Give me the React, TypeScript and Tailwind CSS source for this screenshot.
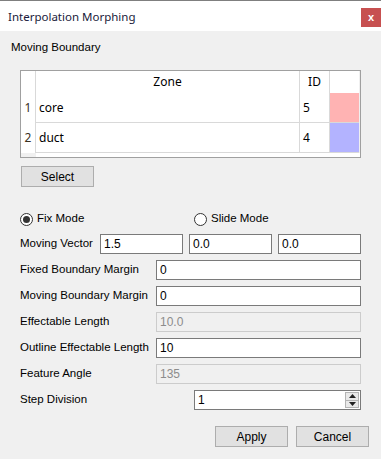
import React from 'react';

const ui = { fontFamily: '"Liberation Sans", Arial, sans-serif' };
const seg = { fontFamily: '"Noto Sans", "Open Sans", sans-serif' };

const TextBox: React.FC<{ value: string; disabled?: boolean; className?: string }> = ({ value, disabled, className }) => (
  <div
    className={`h-[20px] flex items-center pl-[3px] text-[12px] border ${
      disabled ? 'bg-[#f0f0f0] border-[#cccccc] text-[#8c8c8c]' : 'bg-white border-[#7a7a7a] text-black'
    } ${className ?? ''}`}
  >
    {value}
  </div>
);

const FieldRow: React.FC<{ label: string; value: string; disabled?: boolean }> = ({ label, value, disabled }) => (
  <div className="flex items-center mt-[6px] pl-[20px] pr-[20px]">
    <span className="w-[136px] shrink-0 whitespace-nowrap text-[11.5px] text-black">{label}</span>
    <TextBox value={value} disabled={disabled} className="flex-1" />
  </div>
);

const Radio: React.FC<{ checked?: boolean; label: string }> = ({ checked, label }) => (
  <div className="flex items-center gap-[4px]">
    <span className="w-[13px] h-[13px] rounded-full border border-[#333333] bg-white flex items-center justify-center">
      {checked && <span className="w-[7px] h-[7px] rounded-full bg-[#333333]" />}
    </span>
    <span className="text-[11.5px] text-black">{label}</span>
  </div>
);

const WinButton: React.FC<{ label: string; className?: string }> = ({ label, className }) => (
  <div
    className={`w-[73px] h-[21px] flex items-center justify-center bg-[#e1e1e1] border border-[#adadad] text-[12px] text-black ${className ?? ''}`}
  >
    {label}
  </div>
);

const rows = [
  { n: '1', zone: 'core', id: '5', color: 'bg-[#ffb3b3]' },
  { n: '2', zone: 'duct', id: '4', color: 'bg-[#b3b3ff]' },
];

export default function App() {
  return (
    <div className="w-[381px] h-[459px] bg-[#f0f0f0] border-t border-[#7f7f7f] flex flex-col" style={ui}>
      {/* title bar */}
      <div className="h-[30px] bg-white flex justify-between">
        <span className="pl-[8px] pt-[7px] text-[11.5px] text-[#1a1a3a]" style={seg}>
          Interpolation Morphing
        </span>
        <div className="mt-[7px] w-[20px] h-[19px] bg-[#c75050] flex items-center justify-center text-white text-[11px] font-bold">
          x
        </div>
      </div>

      <div className="mt-[8px] pl-[11px] h-[16px] leading-[16px] text-[11.5px] text-black">Moving Boundary</div>

      {/* zone table */}
      <div className="mt-[15px] ml-[20px] w-[341px] h-[88px] border border-[#a0a0a0] bg-white flex flex-col text-[12px] text-black" style={seg}>
        <div className="flex h-[22px]">
          <div className="w-[15px] border-r border-[#d9d9d9]" />
          <div className="w-[264px] border-r border-[#d9d9d9] flex items-center justify-center">Zone</div>
          <div className="w-[30px] border-r border-[#d9d9d9] flex items-center justify-center">ID</div>
          <div className="w-[29px]" />
          <div className="flex-1 bg-[#f0f0f0]" />
        </div>
        {rows.map((r) => (
          <div key={r.n} className="flex h-[30px]">
            <div className="w-[15px] border-r border-[#d9d9d9] flex items-center justify-center text-[#3a3020]">{r.n}</div>
            <div className="w-[264px] border-r border-b border-[#d9d9d9] flex items-center pl-[3px]">{r.zone}</div>
            <div className="w-[30px] border-r border-b border-[#d9d9d9] flex items-center pl-[3px]">{r.id}</div>
            <div className={`w-[29px] border-b border-[#d9d9d9] ${r.color}`} />
            <div className="flex-1 bg-[#f0f0f0]" />
          </div>
        ))}
        <div className="flex flex-1">
          <div className="w-[15px] bg-[#f0f0f0]" />
          <div className="flex-1" />
        </div>
      </div>

      <WinButton label="Select" className="mt-[8px] ml-[21px]" />

      {/* mode */}
      <div className="mt-[24px] h-[16px] pl-[20px] flex items-center">
        <div className="w-[174px]">
          <Radio checked label="Fix Mode" />
        </div>
        <Radio label="Slide Mode" />
      </div>

      <div className="flex items-center mt-[7px] pl-[20px] pr-[20px] gap-[6px]">
        <span className="w-[74px] shrink-0 whitespace-nowrap text-[11.5px] text-black">Moving Vector</span>
        <TextBox value="1.5" className="w-[83px]" />
        <TextBox value="0.0" className="w-[83px]" />
        <TextBox value="0.0" className="w-[83px]" />
      </div>

      <FieldRow label="Fixed Boundary Margin" value="0" />
      <FieldRow label="Moving Boundary Margin" value="0" />
      <FieldRow label="Effectable Length" value="10.0" disabled />
      <FieldRow label="Outline Effectable Length" value="10" />
      <FieldRow label="Feature Angle" value="135" disabled />

      {/* step division */}
      <div className="flex items-center mt-[6px] pl-[20px] pr-[20px]">
        <span className="w-[174px] shrink-0 text-[11.5px] text-black">Step Division</span>
        <div className="flex-1 h-[20px] bg-white border border-[#7a7a7a] flex items-center justify-between pl-[3px] pr-[1px] text-[12px]">
          <span>1</span>
          <div className="w-[14px] h-[16px] border border-[#b4b4b4] bg-[#e9e9e9] flex flex-col">
            <div className="flex-1 flex items-center justify-center border-b border-[#b4b4b4]">
              <svg width="7" height="4" viewBox="0 0 7 4"><path d="M0 4 L3.5 0 L7 4 Z" fill="#222" /></svg>
            </div>
            <div className="flex-1 flex items-center justify-center">
              <svg width="7" height="4" viewBox="0 0 7 4"><path d="M0 0 L3.5 4 L7 0 Z" fill="#222" /></svg>
            </div>
          </div>
        </div>
      </div>

      <div className="mt-[16px] flex justify-end gap-[8px] pr-[12px]">
        <WinButton label="Apply" />
        <WinButton label="Cancel" />
      </div>
    </div>
  );
}
